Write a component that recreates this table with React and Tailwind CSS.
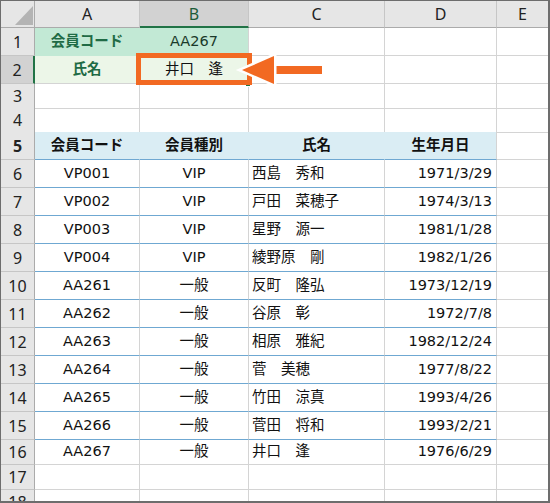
import React from "react"

const COLS = "grid grid-cols-[34px_105px_109px_136px_112px_1fr]"
const BODY = "font-['DejaVu_Sans','Noto_Sans_CJK_JP',sans-serif] text-[14.5px] text-[#111]"
const HEAD = "font-['Noto_Sans','Noto_Sans_CJK_JP',sans-serif] text-[16px] text-[#222]"

const data = [
  ["VP001", "VIP", "西島　秀和", "1971/3/29"],
  ["VP002", "VIP", "戸田　菜穂子", "1974/3/13"],
  ["VP003", "VIP", "星野　源一", "1981/1/28"],
  ["VP004", "VIP", "綾野原　剛", "1982/1/26"],
  ["AA261", "一般", "反町　隆弘", "1973/12/19"],
  ["AA262", "一般", "谷原　彰", "1972/7/8"],
  ["AA263", "一般", "相原　雅紀", "1982/12/24"],
  ["AA264", "一般", "菅　美穂", "1977/8/22"],
  ["AA265", "一般", "竹田　涼真", "1993/4/26"],
  ["AA266", "一般", "菅田　将和", "1993/2/21"],
  ["AA267", "一般", "井口　逢", "1976/6/29"],
]

const RowHead = ({ n, sel }) => (
  <div
    className={
      sel
        ? `${HEAD} flex items-center justify-center bg-[#d2d2d2] border-r-2 border-r-[#217346] border-b border-b-[#c6c6c6] text-[#1d5c3a]`
        : `${HEAD} flex items-center justify-center bg-[#e6e6e6] border-r border-r-[#ababab] border-b border-b-[#c6c6c6]`
    }
  >
    {n}
  </div>
)

const Blank = ({ b = "border-b-[#d4d4d4]" }) => (
  <div className={`border-r border-r-[#d4d4d4] border-b ${b}`} />
)

export default function App() {
  return (
    <div className="relative w-[550px] h-[503px] overflow-hidden bg-white border-l border-t border-r-2 border-b-2 border-[#6d6d6d]">
      {/* column headers */}
      <div className={`${COLS} h-[27px] ${HEAD}`}>
        <div className="relative bg-[#e6e6e6] border-r border-b border-[#ababab]">
          <svg className="absolute left-[14px] top-[5px]" width="18" height="19" viewBox="0 0 18 19">
            <polygon points="0,19 18,0 18,19" fill="#b4b4b4" />
          </svg>
        </div>
        <div className="flex items-center justify-center bg-[#e6e6e6] border-r border-r-[#c6c6c6] border-b border-b-[#ababab]">A</div>
        <div className="flex items-center justify-center bg-[#d2d2d2] border-r border-r-[#c6c6c6] border-b-2 border-b-[#217346] text-[#1d5c3a]">B</div>
        <div className="flex items-center justify-center bg-[#e6e6e6] border-r border-r-[#c6c6c6] border-b border-b-[#ababab]">C</div>
        <div className="flex items-center justify-center bg-[#e6e6e6] border-r border-r-[#c6c6c6] border-b border-b-[#ababab]">D</div>
        <div className="flex items-center justify-center bg-[#e6e6e6] border-b border-b-[#ababab]">E</div>
      </div>

      {/* row 1 */}
      <div className={`${COLS} h-[28px] ${BODY}`}>
        <RowHead n="1" />
        <div className="flex items-center justify-center bg-[#c2e9d5] border-r border-b border-[#c2e9d5] font-bold text-[#1f6b45]">会員コード</div>
        <div className="flex items-center justify-center bg-[#c2e9d5] border-r border-r-[#d4d4d4] border-b border-b-[#c2e9d5] text-[#1a3a2a]">AA267</div>
        <Blank />
        <Blank />
        <div className="border-b border-b-[#d4d4d4]" />
      </div>

      {/* row 2 */}
      <div className={`${COLS} h-[28px] ${BODY}`}>
        <RowHead n="2" sel />
        <div className="flex items-center justify-center bg-[#ecf6e8] border-r border-r-[#ecf6e8] border-b border-b-[#d4d4d4] font-bold text-[#1f6b45]">氏名</div>
        <div className="flex items-center justify-center bg-[#ecf6e8] border-r border-r-[#d4d4d4] border-b border-b-[#d4d4d4]">井口　逢</div>
        <Blank />
        <Blank />
        <div className="border-b border-b-[#d4d4d4]" />
      </div>

      {/* rows 3, 4 */}
      <div className={`${COLS} h-[24px]`}>
        <RowHead n="3" />
        <Blank />
        <Blank />
        <Blank />
        <Blank />
        <div className="border-b border-b-[#d4d4d4]" />
      </div>
      <div className={`${COLS} h-[24px]`}>
        <RowHead n="4" />
        <Blank b="border-b-[#6fa8d2]" />
        <Blank b="border-b-[#6fa8d2]" />
        <Blank b="border-b-[#6fa8d2]" />
        <Blank b="border-b-[#6fa8d2]" />
        <div className="border-b border-b-[#d4d4d4]" />
      </div>

      {/* table header row 5 */}
      <div className={`${COLS} h-[28px] ${BODY} font-bold`}>
        <RowHead n="5" />
        <div className="flex items-center justify-center bg-[#daedf4] border-r border-r-[#daedf4] border-b border-b-[#6fa8d2]">会員コード</div>
        <div className="flex items-center justify-center bg-[#daedf4] border-r border-r-[#daedf4] border-b border-b-[#6fa8d2]">会員種別</div>
        <div className="flex items-center justify-center bg-[#daedf4] border-r border-r-[#daedf4] border-b border-b-[#6fa8d2]">氏名</div>
        <div className="flex items-center justify-center bg-[#daedf4] border-r border-r-[#d4d4d4] border-b border-b-[#6fa8d2]">生年月日</div>
        <div className="border-b border-b-[#d4d4d4]" />
      </div>

      {/* table rows */}
      {data.map((d, i) => {
        const last = i === data.length - 1
        const bb = last ? "border-b-[#d4d4d4]" : "border-b-[#6fa8d2]"
        return (
          <div key={d[0]} className={`${COLS} ${last ? "h-[25px]" : "h-[28px]"} ${BODY}`}>
            <RowHead n={i + 6} />
            <div className={`flex items-center justify-center border-r border-r-[#d4d4d4] border-b ${bb}`}>{d[0]}</div>
            <div className={`flex items-center justify-center border-r border-r-[#d4d4d4] border-b ${bb}`}>{d[1]}</div>
            <div className={`flex items-center pl-[3px] border-r border-r-[#d4d4d4] border-b ${bb}`}>{d[2]}</div>
            <div className={`flex items-center justify-end pr-[4px] border-r border-r-[#d4d4d4] border-b ${bb}`}>{d[3]}</div>
            <div className="border-b border-b-[#d4d4d4]" />
          </div>
        )
      })}

      {/* rows 17, 18 */}
      <div className={`${COLS} h-[25px]`}>
        <RowHead n="17" />
        <Blank />
        <Blank />
        <Blank />
        <Blank />
        <div className="border-b border-b-[#d4d4d4]" />
      </div>
      <div className={`${COLS} h-[25px]`}>
        <RowHead n="18" />
        <Blank />
        <Blank />
        <Blank />
        <Blank />
        <div className="border-b border-b-[#d4d4d4]" />
      </div>

      {/* fill handle */}
      <div className="absolute left-[244px] top-[80px] w-[6px] h-[6px] bg-[#217346] border border-white" />

      {/* highlight box */}
      <div className="absolute left-[135px] top-[52px] w-[116px] h-[32px] border-[5px] border-[#f26922]" />

      {/* arrow */}
      <svg className="absolute left-[229px] top-[47px]" width="100" height="44" viewBox="0 0 100 44">
        <rect x="43" y="18" width="49" height="8" fill="#f26922" />
        <polygon
          points="12,22 44,8 44,36"
          fill="#f26922"
          stroke="#fff"
          strokeWidth="5"
          strokeLinejoin="miter"
          paintOrder="stroke"
        />
      </svg>
    </div>
  )
}
